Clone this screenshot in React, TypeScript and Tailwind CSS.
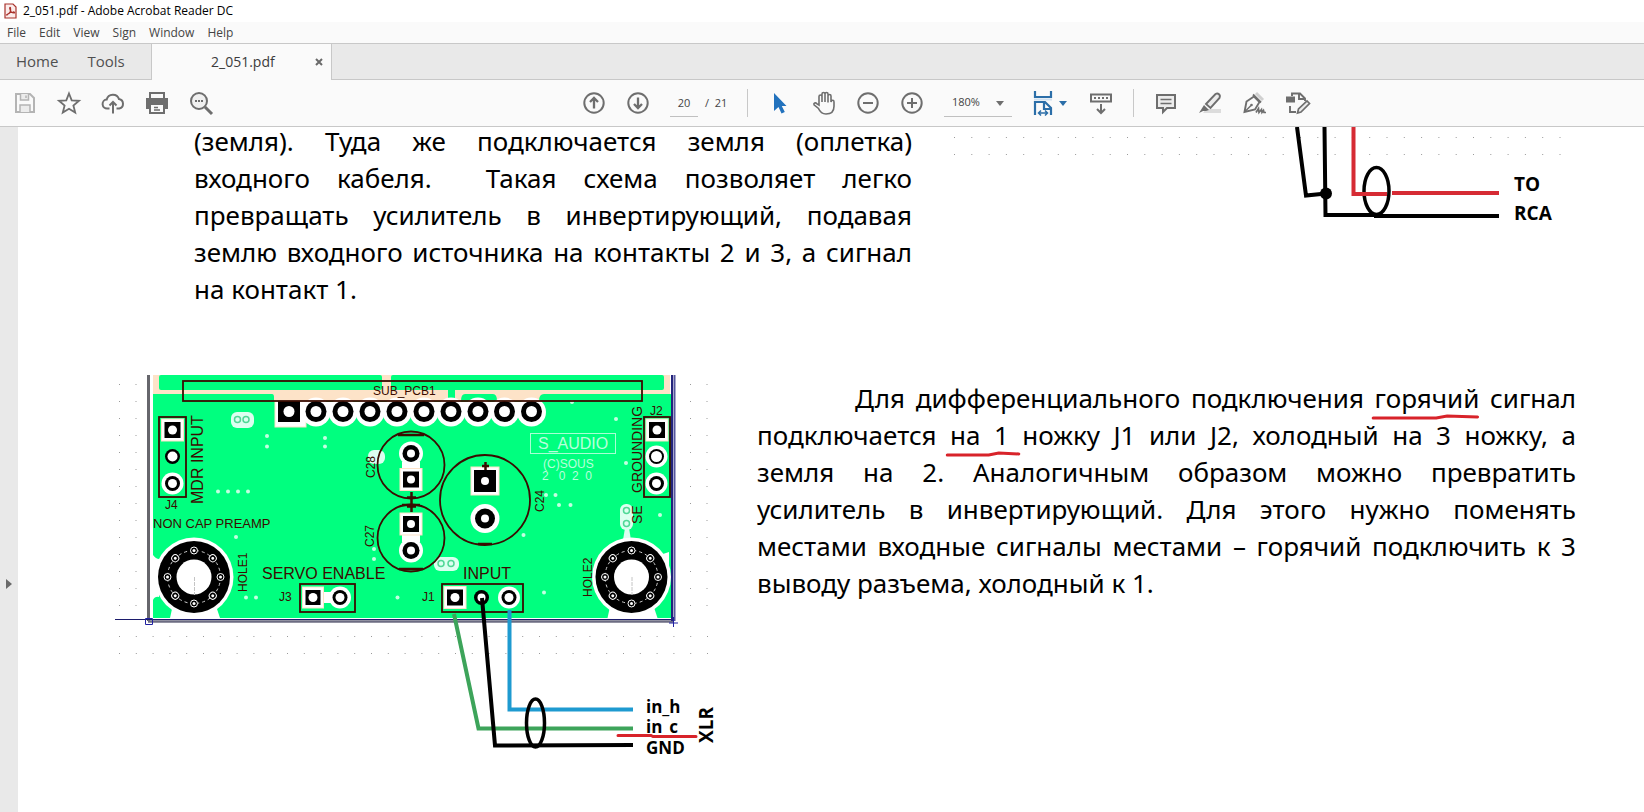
import type { ReactNode } from "react";

const MENU = ["File", "Edit", "View", "Sign", "Window", "Help"];

// board geometry, in the drawing's own units
const HEADER_PINS = [316, 343, 370, 397, 424, 451, 478, 504.5, 531.5];
const VIAS = [
  [267, 436], [267, 446.5], [325, 438], [325, 446.5], [218, 491.5], [228, 491.5], [238, 491.5],
  [248, 491.5], [236, 537], [374, 549], [374, 559], [246, 597.5], [256, 597.5], [397.5, 597.5],
  [572, 402], [616, 419], [626, 463], [546, 495], [555.5, 495], [559, 505], [570.5, 505],
  [660, 515], [523.5, 535], [544, 592.5],
];
const INK = "#3a0c00";

function ToolButton({ label, children, className = "w-11" }: { label: string; children: ReactNode; className?: string }) {
  return (
    <button type="button" aria-label={label} className={`flex h-11 shrink-0 items-center justify-center ${className}`}>
      <svg width="28" height="28" viewBox="0 0 28 28" fill="none" stroke="#6e6e6e" strokeWidth="2">
        {children}
      </svg>
    </button>
  );
}

function Caret({ color }: { color: string }) {
  return (
    <svg width="8" height="5" viewBox="0 0 8 5" className="shrink-0">
      <path d="M0 0h8L4 5z" fill={color} />
    </svg>
  );
}

function Ring({ x, y, r, hole, halo = 0 }: { x: number; y: number; r: number; hole: number; halo?: number }) {
  return (
    <g>
      {halo > 0 && <circle cx={x} cy={y} r={halo} fill="#fff" />}
      <circle cx={x} cy={y} r={r} fill="#000" />
      <circle cx={x} cy={y} r={hole} fill="#fff" />
    </g>
  );
}

function SquarePad({ x, y, size, hole = 4.5 }: { x: number; y: number; size: number; hole?: number }) {
  return (
    <g>
      <rect x={x - size / 2 - 3} y={y - size / 2 - 3} width={size + 6} height={size + 6} fill="#fff" stroke="#fde3c8" />
      <rect x={x - size / 2} y={y - size / 2} width={size} height={size} fill="#000" />
      <circle cx={x} cy={y} r={hole} fill="#fff" />
    </g>
  );
}

function MountingHole({ x, y }: { x: number; y: number }) {
  return (
    <g>
      <circle cx={x} cy={y} r="39.5" fill="#fff" />
      <path d={`M${x - 20} 600L${x - 24} 618h50L${x + 20} 600z`} fill="#fff" />
      <circle cx={x} cy={y} r="36" fill="#000" />
      <circle cx={x} cy={y} r="26.5" fill="none" stroke="#ccc" strokeDasharray="3 3" />
      {[0, 45, 90, 135, 180, 225, 270, 315].map((a) => (
        <g key={a} transform={`rotate(${a} ${x} ${y})`}>
          <circle cx={x} cy={y - 26.5} r="3.5" fill="#000" stroke="#fff" />
          <circle cx={x} cy={y - 26.5} r="1.5" fill="#fff" />
        </g>
      ))}
      <circle cx={x} cy={y} r="17.5" fill="#fff" />
      <path d={`M${x + 0.5} ${y}v18`} stroke="#c4c4c4" strokeDasharray="4 1" />
    </g>
  );
}

function Side({ x, y, size, children }: { x: number; y: number; size: number; children: string }) {
  return (
    <text transform={`translate(${x} ${y}) rotate(-90)`} fontSize={size}>
      {children}
    </text>
  );
}

function Dots({ x0, x1, rows, step }: { x0: number; x1: number; rows: number[]; step: number }) {
  return (
    <>
      {rows.map((y) => (
        <path key={y} d={`M${x0} ${y}H${x1}`} stroke="#9a9a9a" strokeWidth="1" strokeDasharray={`1 ${step - 1}`} />
      ))}
    </>
  );
}

function BoardFigure() {
  return (
    <svg viewBox="112 366 608 394" className="w-[608px] shrink-0" role="img" aria-label="XLR">
      {/* placement grid */}
      <Dots x0={119} x1={137} rows={[...Array(14)].map((_, i) => 384.5 + i * 17)} step={16.5} />
      <Dots x0={690} x1={708} rows={[...Array(14)].map((_, i) => 384.5 + i * 17)} step={16.5} />
      <Dots x0={119} x1={709} rows={[636.5, 653.5]} step={16.8} />

      {/* copper */}
      <rect x="150" y="375" width="521" height="244" fill="#fff" />
      <rect x="153" y="375" width="517" height="242" fill="#fde3c8" />
      <rect x="159" y="375" width="223" height="15" rx="2" fill="#00ff7f" />
      <rect x="391" y="375" width="273" height="15" rx="2" fill="#00ff7f" />
      <path d="M153 394h119q2 0 2 3v4h181v-11h-7v11h13q0-7 4-7h28q4 0 4 7h42q0-7 5-7h126q3 0 3 3v221H153z" fill="#00ff7f" />
      <rect x="448" y="390" width="7" height="12" fill="#00ff7f" />
      <path d="M153 555q3 4 6 4v38q-4-1-6 3zM669 552v14q-4-1-6-12z" fill="#fff" />

      {/* header */}
      <rect x="275" y="400" width="31" height="27" fill="#fff" stroke="#fde3c8" />
      {HEADER_PINS.map((x) => (
        <circle key={x} cx={x} cy="412" r="14.5" fill="#fff" />
      ))}
      <path d="M304 402h236v6H304z" fill="#fff" />
      {HEADER_PINS.map((x) => (
        <Ring key={x} x={x} y={411.5} r={10.5} hole={5.5} />
      ))}
      <rect x="278" y="401" width="22" height="21" fill="#000" />
      <circle cx="289" cy="411.5" r="5.5" fill="#fff" />

      {/* vias */}
      {VIAS.map(([x, y]) => (
        <circle key={`${x}-${y}`} cx={x} cy={y} r="2" fill="#c4ffe2" />
      ))}
      <g fill="#dcfff0">
        <rect x="231" y="412" width="23" height="16" rx="6" />
        <rect x="434" y="557" width="25" height="14" rx="6" />
        <rect x="620" y="504" width="13" height="26" rx="6" />
        <path d="M625 528h4l2 12h-8z" />
        <rect x="368" y="450" width="17" height="14" rx="6" />
      </g>
      <g fill="none" stroke="#4fd896" strokeWidth="1.5">
        {[[237.5, 419.5], [246, 419.5], [441, 563.5], [451, 563.5], [626.5, 510.5], [626.5, 523.5]].map(([x, y]) => (
          <circle key={`${x}-${y}`} cx={x} cy={y} r="3" />
        ))}
      </g>

      {/* pads */}
      <SquarePad x={172.5} y={430} size={16} />
      <Ring x={172.5} y={456.5} r={7.5} hole={5} />
      <Ring x={172.5} y={483.5} r={7.5} hole={4.5} halo={11} />
      <SquarePad x={657} y={430} size={16} />
      <Ring x={656.5} y={456.5} r={7.5} hole={5.5} halo={11} />
      <Ring x={656.5} y={483.5} r={7.5} hole={4.5} halo={11} />
      <path d="M402 462h18v8h-18zM402 530h18v12h-18z" fill="#fff" />
      <Ring x={411} y={453.5} r={8.5} hole={4} halo={12} />
      <SquarePad x={411} y={479.5} size={16} hole={4} />
      <Ring x={411} y={550.5} r={8.5} hole={4} halo={12} />
      <SquarePad x={411} y={524} size={16} hole={4} />
      <SquarePad x={485} y={481} size={22} hole={4} />
      <Ring x={485} y={518.5} r={10} hole={4} halo={14.5} />
      <path d="M320 592h15v11h-15z" fill="#fff" />
      <SquarePad x={313} y={597.5} size={15} />
      <Ring x={340} y={597.5} r={7.5} hole={4.5} halo={11} />
      <SquarePad x={455} y={597.5} size={16} />
      <Ring x={481.5} y={597.5} r={7.5} hole={4} />
      <Ring x={509} y={597.5} r={7.5} hole={4.5} halo={11} />
      <MountingHole x={194} y={577} />
      <MountingHole x={631.5} y={577} />

      {/* silkscreen */}
      <g fill="none" stroke={INK} strokeWidth="1.8">
        <rect x="183" y="381" width="459" height="20" />
        <rect x="159" y="417" width="27" height="80" />
        <rect x="644" y="417" width="26" height="80" />
        <rect x="300" y="584" width="55" height="28" />
        <rect x="442" y="584" width="81" height="28" />
        <circle cx="411" cy="465" r="33.5" />
        <circle cx="411" cy="538" r="33.5" />
        <circle cx="485" cy="500" r="45" />
        <path d="M411.5 492v20M407 497.5h9M407 506.5h9M485.5 462v8M482 466h7" strokeWidth="2.5" />
        <path d="M398 435h26M402 505h18M399 569h24M478 544h14" strokeWidth="2.5" />
      </g>
      <g fill={INK} fontFamily='"Liberation Sans", sans-serif'>
        <text x="373" y="395" fontSize="12">SUB_PCB1</text>
        <text x="165" y="509" fontSize="12">J4</text>
        <text x="650" y="415" fontSize="12">J2</text>
        <text x="279" y="601" fontSize="12">J3</text>
        <text x="422" y="601" fontSize="12">J1</text>
        <text x="153" y="528" fontSize="13">NON CAP PREAMP</text>
        <text x="262" y="579" fontSize="16">SERVO ENABLE</text>
        <text x="463" y="579" fontSize="16">INPUT</text>
        <Side x={203} y={504} size={16}>MDR INPUT</Side>
        <Side x={642} y={493} size={14}>GROUNDING</Side>
        <Side x={642} y={524} size={14}>SE</Side>
        <Side x={247} y={592} size={12}>HOLE1</Side>
        <Side x={592} y={597} size={12}>HOLE2</Side>
        <Side x={375} y={478} size={12}>C28</Side>
        <Side x={374} y={547} size={12}>C27</Side>
        <Side x={544} y={512} size={12}>C24</Side>
      </g>
      <rect x="530.5" y="433.5" width="85" height="20" fill="none" stroke="#a8ffd4" />
      <g fill="#b8ffdc" fontFamily='"Liberation Sans", sans-serif'>
        <text x="538" y="449" fontSize="16">S_AUDIO</text>
        <text x="543" y="468" fontSize="12">(C)SOUS</text>
        <text x="542" y="480" fontSize="12" xmlSpace="preserve">2   0  2  0</text>
      </g>

      {/* board outline */}
      <path d="M148.5 375v246" stroke="#66666c" strokeWidth="3" />
      <path d="M148 621.5h525" stroke="#6c6c82" strokeWidth="2.5" />
      <path d="M115 619.5h558" stroke="#1c1c6c" />
      <path d="M672 375v246" stroke="#24247c" strokeWidth="2" />
      <path d="M674.5 375v246" stroke="#55559c" strokeWidth="2" />
      <path d="M145.5 618.5h7v6h-7zM669 623h9M673.5 617v10" fill="none" stroke="#2020a0" />

      {/* cable */}
      <g fill="none" strokeWidth="4">
        <path d="M454 614L478.5 728.5H633" stroke="#3da45a" />
        <path d="M482 598L495 745.5L633 745" stroke="#000" />
        <path d="M509.5 610V709.5H633" stroke="#1e9ad0" />
        <ellipse cx="535.5" cy="723" rx="9" ry="24" stroke="#000" strokeWidth="3.5" />
      </g>
      <g fontFamily='"Open Sans", sans-serif' fontWeight="700" fontSize="17">
        <text x="646" y="713">in_h</text>
        <text x="646" y="733">in_c</text>
        <text x="646" y="754">GND</text>
        <Side x={713} y={743} size={19}>XLR</Side>
      </g>
      <path d="M618 735.5H651l2 1h43" fill="none" stroke="#d8232a" strokeWidth="3" strokeLinecap="round" />
    </svg>
  );
}

function RcaFigure() {
  return (
    <svg viewBox="950 127 626 100" className="w-[626px] shrink-0" role="img" aria-label="TO RCA">
      <Dots x0={954} x1={1562} rows={[137.5, 154.5]} step={17.3} />
      <g fill="none" stroke="#000" strokeWidth="4">
        <path d="M1297 127L1306 195.5L1326 193.5" />
        <path d="M1324.5 127L1325.5 215H1376L1376 216H1499" />
        <ellipse cx="1376.5" cy="191" rx="12.5" ry="23.5" strokeWidth="3.5" />
      </g>
      <circle cx="1326" cy="193.5" r="6" />
      <path d="M1353.5 127V194H1387M1392 193H1499" fill="none" stroke="#d62b34" strokeWidth="4" />
      <g fontFamily='"Open Sans", sans-serif' fontWeight="700" fontSize="19">
        <text x="1514" y="191">TO</text>
        <text x="1514" y="220">RCA</text>
      </g>
    </svg>
  );
}

function Line({ children, last = false, indent = false }: { children: ReactNode; last?: boolean; indent?: boolean }) {
  return (
    <span
      className={`block whitespace-nowrap ${last ? "" : "[text-align-last:justify]"} ${indent ? "indent-[98px]" : ""}`}
    >
      {children}
    </span>
  );
}

// red pen stroke under a phrase
function Marked({ children, d }: { children: ReactNode; d: string }) {
  return (
    <span className="relative">
      {children}
      <svg
        viewBox="0 0 100 6"
        preserveAspectRatio="none"
        className="absolute -bottom-1 -left-1 h-[6px] w-[calc(100%+4px)] overflow-visible"
      >
        <path d={d} fill="none" stroke="#d8232a" strokeWidth="3" strokeLinecap="round" vectorEffect="non-scaling-stroke" />
      </svg>
    </span>
  );
}

export default function App() {
  return (
    <div className="flex h-screen flex-col overflow-hidden bg-white font-['Open_Sans','Noto_Sans',sans-serif] text-[#444]">
      <header className="shrink-0">
        <div className="flex h-[22px] items-center gap-[6px] pl-1 text-xs text-black">
          <svg width="13" height="16" viewBox="0 0 13 16">
            <path d="M1 1h8l3 3v11H1z" fill="#fbeceb" stroke="#a8322c" strokeWidth="1.2" />
            <path d="M3 11.5c3-1 4-4 3.500-6.500-.3-1.200-1-.6-.8.5C6.200 8 8 10 10 10c1 0 .6-1.200-1-1-2 .2-4.500 1-5.500 2.500-.5.900-1.200.7-.5 0z" fill="none" stroke="#a8322c" strokeWidth="1.2" />
          </svg>
          <h1>2_051.pdf - Adobe Acrobat Reader DC</h1>
        </div>
        <nav className="flex h-[21px] items-center gap-[13px] bg-[#fafafa] pl-[7px] text-xs">
          {MENU.map((m) => (
            <button key={m} type="button">
              {m}
            </button>
          ))}
        </nav>
        <div className="flex h-[37px] border-y border-[#c8c8c8] bg-[#e9e9e9] text-[#505050]">
          <div className="flex w-[151px] shrink-0 items-center gap-[29px] pl-4 text-[15px]">
            <button type="button">Home</button>
            <button type="button">Tools</button>
          </div>
          <div className="-mb-px flex w-[181px] shrink-0 items-center justify-between border-x border-[#c8c8c8] bg-[#fafafa] pr-2 pl-[59px] text-sm text-[#3c3c3c]">
            <button type="button">2_051.pdf</button>
            <button type="button" aria-label="Close tab">
              <svg width="8" height="8" viewBox="0 0 8 8" stroke="#6a6a6a" strokeWidth="2">
                <path d="M1 1l6 6M7 1L1 7" />
              </svg>
            </button>
          </div>
        </div>
        <div className="flex h-[47px] items-center border-b border-[#c8c8c8] bg-[#fafafa] pl-[3px] text-[11px]">
          <ToolButton label="Save">
            <g stroke="#b4b4b4">
              <path d="M5 5h14l4 4v14H5z" />
              <path d="M9.5 5v6h8V5M9 23v-7h10v7" fill="#ececec" strokeWidth="1.5" />
              <path d="M15 6.5v2.5" strokeWidth="1.5" />
            </g>
          </ToolButton>
          <ToolButton label="Star">
            <path d="M14 4.5l2.7 6.8 7.3.5-5.6 4.7 1.8 7.1L14 19.7l-6.200 3.900 1.800-7.100L4 11.800l7.300-.5z" strokeWidth="1.8" />
          </ToolButton>
          <ToolButton label="Upload">
            <path d="M10.5 19.5H8.5a4.5 4.5 0 0 1-.8-9 6.4 6.4 0 0 1 12.3-.4 4.8 4.8 0 0 1 .3 9.4H17.5M14 24.5V13M10.5 16.5L14 13l3.5 3.5" />
          </ToolButton>
          <ToolButton label="Print">
            <path d="M7 10V4h14v6" />
            <path d="M3 9h22v11h-3v-4H6v4H3z" fill="#6e6e6e" stroke="none" />
            <path d="M7 15h14v9H7z" fill="#fafafa" />
            <path d="M11 18.5h4M11 21h6" strokeWidth="1.5" />
          </ToolButton>
          <ToolButton label="Search">
            <circle cx="12" cy="12" r="8" fill="#f0f0f0" />
            <path d="M18 18l7 7" strokeWidth="3" />
            <path d="M8 12h2M11 12h2M14 12h2" />
          </ToolButton>

          <div className="flex-[350]" />

          <ToolButton label="Previous page">
            <circle cx="14" cy="14" r="9.7" />
            <path d="M14 19.5V9M10 13l4-4 4 4" strokeWidth="2.3" />
          </ToolButton>
          <ToolButton label="Next page">
            <circle cx="14" cy="14" r="9.7" />
            <path d="M14 8.5V19M10 15l4 4 4-4" strokeWidth="2.3" />
          </ToolButton>
          <input
            aria-label="Page"
            defaultValue="20"
            className="ml-[10px] h-[27px] w-7 shrink-0 border-b border-[#c0c0c0] bg-transparent text-center outline-none"
          />
          <span className="ml-[7px] w-[42px] shrink-0 whitespace-pre">/  21</span>
          <div className="h-7 w-px shrink-0 bg-[#c8c8c8]" />
          <ToolButton label="Select" className="ml-[10px] w-11">
            <path d="M8 4v18l4.500-4 3 6.500 3.300-1.400L15.800 17H20.500z" fill="#2272bd" stroke="none" />
          </ToolButton>
          <ToolButton label="Pan">
            <path d="M9 16V7.500a1.500 1.500 0 0 1 3 0V13V5a1.500 1.500 0 0 1 3 0v8V5a1.500 1.500 0 0 1 3 0v8.500V7a1.500 1.500 0 0 1 3 0v6q.5-2 2-1.800 1.200.3 1 2v4c0 5-3 7.800-8 7.800-4 0-6-2-7.500-5.500L4 15.800c-.6-1.800 1.500-2.700 2.700-1.200z" strokeWidth="1.6" />
          </ToolButton>
          <ToolButton label="Zoom out">
            <circle cx="14" cy="14" r="9.7" />
            <path d="M9 14h10" />
          </ToolButton>
          <ToolButton label="Zoom in">
            <circle cx="14" cy="14" r="9.7" />
            <path d="M9 14h10M14 9v10" />
          </ToolButton>
          <div className="relative ml-[10px] flex w-[68px] shrink-0 items-center">
            <select
              aria-label="Zoom"
              defaultValue="180%"
              className="h-[27px] w-full appearance-none border-b border-[#c0c0c0] bg-transparent pl-2 outline-none"
            >
              <option>100%</option>
              <option>180%</option>
            </select>
            <span className="pointer-events-none absolute right-2">
              <Caret color="#6e6e6e" />
            </span>
          </div>
          <button type="button" aria-label="Fit width" className="ml-[18px] flex h-11 shrink-0 items-center gap-[3px]">
            <svg width="26" height="28" viewBox="0 0 26 28" fill="none" stroke="#2b6ea8" strokeWidth="2.2">
              <path d="M5 2v6h16V2" />
              <path d="M4 10.5h18" stroke="#cfe0f0" strokeWidth="2" />
              <path d="M5 26V13h10l6 6v7M14 13v7h7" />
              <path d="M8.500 24h9M11 21.500L8.500 24l2.500 2.500M15 21.500l2.500 2.500-2.500 2.500" strokeWidth="1.5" />
            </svg>
            <Caret color="#2b6ea8" />
          </button>
          <ToolButton label="Show toolbar" className="ml-3 w-11">
            <path d="M4 5.5h20v7H4z" />
            <path d="M7 9h14" strokeDasharray="2 2" />
            <path d="M14 15v8.5M10 20l4 4 4-4" />
          </ToolButton>
          <div className="ml-[10px] h-7 w-px shrink-0 bg-[#c8c8c8]" />
          <ToolButton label="Comment" className="ml-[10px] w-11">
            <path d="M5 6h18v13h-8l-4 4v-4H5z" fill="#ececec" />
            <path d="M8.5 10.5h11M8.5 14.5h11" strokeWidth="1.5" />
          </ToolButton>
          <ToolButton label="Highlight">
            <path d="M10 20h15v4H7z" fill="#dcdcdc" stroke="none" />
            <path d="M10 15L19.500 5q2-1 3.500.3t.5 3.700L14.500 19z" fill="#ececec" strokeWidth="1.9" />
            <path d="M8 16l5 5-3 1H7l-4 2z" fill="#6e6e6e" stroke="none" />
          </ToolButton>
          <ToolButton label="Sign">
            <path d="M16 4l7 7" stroke="#d0d0d0" strokeWidth="3" />
            <path d="M13 5.500l8 8M4.500 23l2-10.500 7.500-5 5.500 5.500-4.500 7.500z" strokeWidth="1.9" />
            <path d="M5 22.500l6-6" strokeWidth="1.5" />
            <circle cx="11.5" cy="16" r="1.3" fill="#6e6e6e" stroke="none" />
            <path d="M16 23.500l2.500-4 .5 4 2.500-3 .5 3 1.500-2 .5 2h2" strokeWidth="1.7" />
          </ToolButton>
          <ToolButton label="More tools">
            <path d="M2 7.500h9v6H2z" fill="#6e6e6e" stroke="none" />
            <path d="M8 7V4.500h8l5 5V12M15 5v5h5M6 17v6h6" strokeWidth="1.9" />
            <path d="M13.500 24l1-4 8.500-8 2.500 2.500-8.500 8.500z" fill="#ececec" strokeWidth="1.7" />
          </ToolButton>

          <div className="flex-[325]" />
        </div>
      </header>

      <div className="flex min-h-0 flex-1">
        <aside className="flex w-[18px] shrink-0 items-center bg-[#e9e9e9] pt-[228px]">
          <button type="button" aria-label="Open panel" className="pl-[6px]">
            <svg width="6" height="10" viewBox="0 0 6 10">
              <path d="M0 0v10l6-5z" fill="#6a6a6a" />
            </svg>
          </button>
        </aside>

        <main className="min-w-0 flex-1 overflow-hidden pr-[68px] pl-[94px] font-['Noto_Sans',sans-serif] text-[26px] leading-[37px] text-black">
          <section className="flex items-start gap-[38px] pl-[82px]">
            <p className="-mt-1 min-w-0 flex-1">
              <Line>(земля). Туда же подключается земля (оплетка)</Line>
              <Line>входного кабеля.&nbsp; Такая схема позволяет легко</Line>
              <Line>превращать усилитель в инвертирующий, подавая</Line>
              <Line>землю входного источника на контакты 2 и 3, а сигнал</Line>
              <Line last>на контакт 1.</Line>
            </p>
            <RcaFigure />
          </section>
          <section className="mt-[58px] flex items-start gap-[37px]">
            <BoardFigure />
            <p className="min-w-0 flex-1 pt-3.5">
              <Line indent>
                Для дифференциального подключения <Marked d="M2 4H60L70 2L98 3">горячий</Marked> сигнал
              </Line>
              <Line>
                подключается <Marked d="M2 4H68L84 2L116 3">на 1</Marked> ножку J1 или J2, холодный на 3 ножку, а
              </Line>
              <Line>земля на 2. Аналогичным образом можно превратить</Line>
              <Line>усилитель в инвертирующий. Для этого нужно поменять</Line>
              <Line>местами входные сигналы местами – горячий подключить к 3</Line>
              <Line last>выводу разъема, холодный к 1.</Line>
            </p>
          </section>
        </main>
      </div>
    </div>
  );
}
